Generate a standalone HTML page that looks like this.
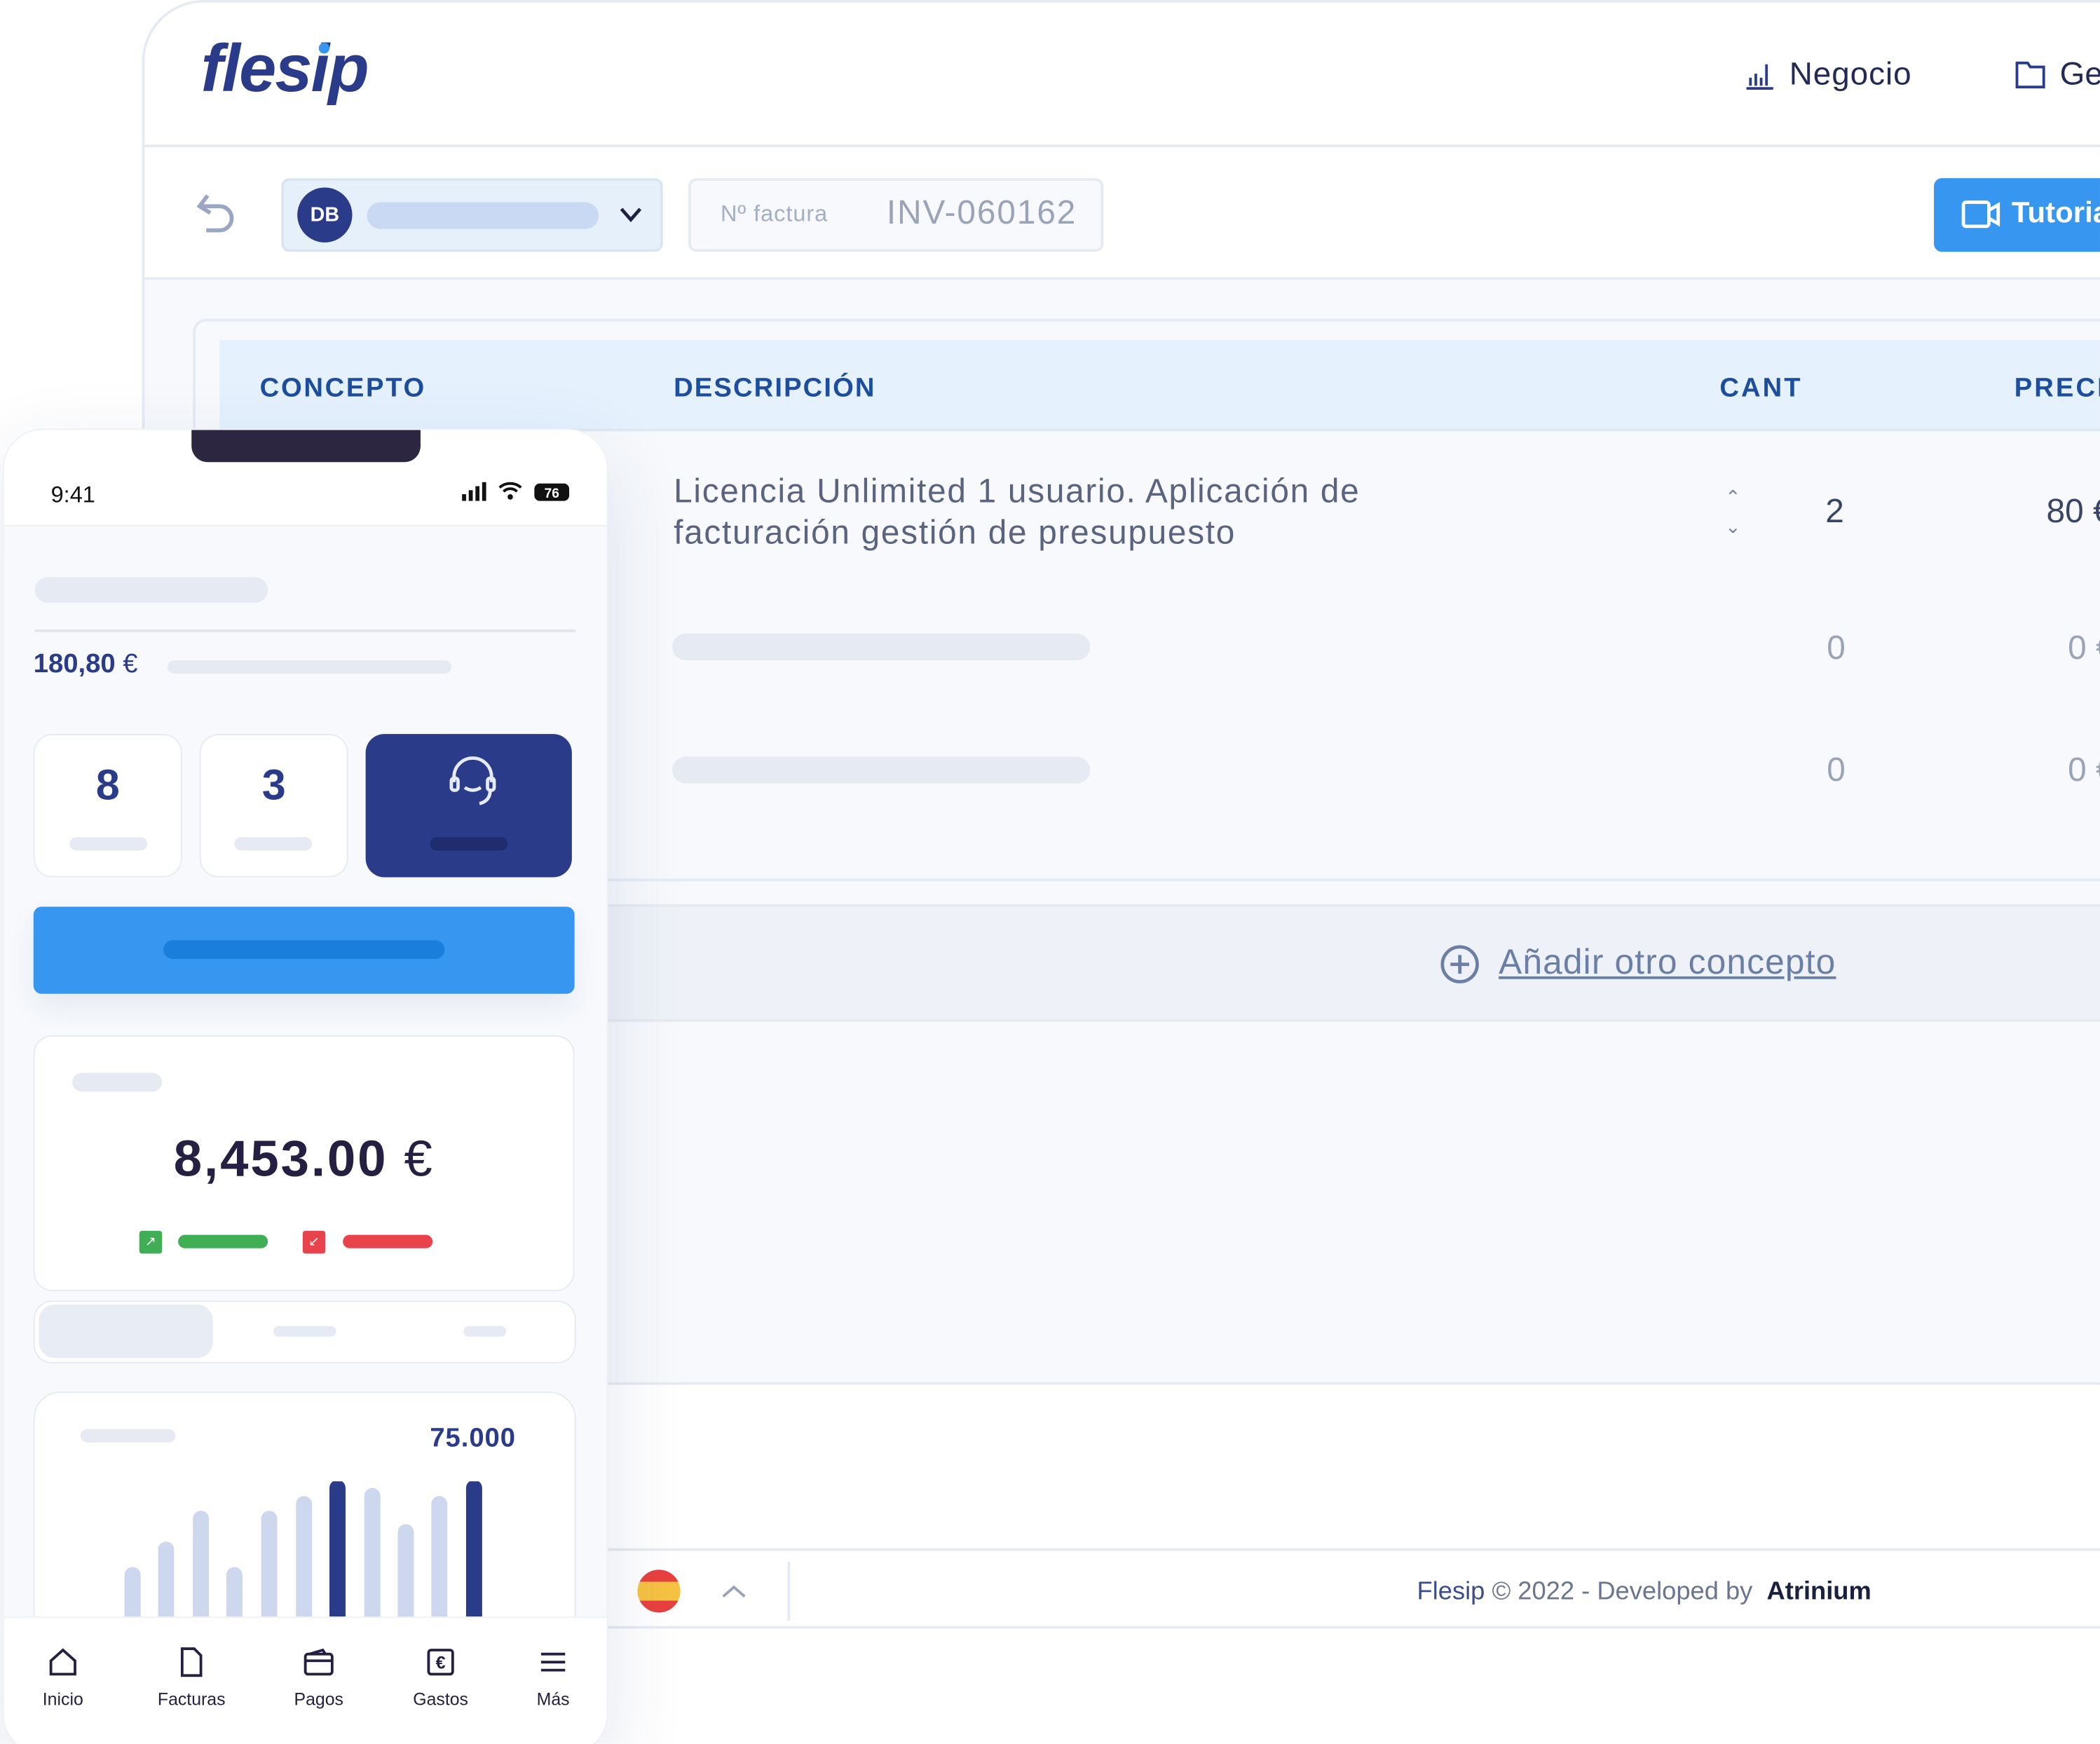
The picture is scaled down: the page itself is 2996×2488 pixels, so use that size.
<!DOCTYPE html>
<html><head><meta charset="utf-8"><style>
*{box-sizing:border-box;margin:0;padding:0}
html,body{width:2996px;height:2488px;overflow:hidden;background:#fff}
#s{position:absolute;left:0;top:0;width:1568px;height:1302px;transform:scale(1.9107);transform-origin:0 0;font-family:"Liberation Sans",sans-serif;background:#fff;overflow:hidden}
.a{position:absolute}
.bar{position:absolute;border-radius:10px}
</style></head><body><div id="s">
<div class="a" style="left:106px;top:0;width:1500px;height:1216px;border:2px solid #e6ebf3;border-radius:46px 0 0 0;background:#f7f9fc;overflow:hidden">
  <div class="a" style="left:0;top:0;width:100%;height:108px;background:#fff;border-bottom:2px solid #e6ebf3"></div>
  <div class="a" style="left:42px;top:20px;font-size:50px;font-weight:bold;font-style:italic;color:#2a3b8a;letter-spacing:-1px">flesip</div>
  <div class="a" style="left:130px;top:30px;width:8px;height:8px;border-radius:50%;background:#3797f0"></div>
  <svg class="a" style="left:1194px;top:42px" width="24" height="24" viewBox="0 0 24 24" fill="none" stroke="#2a3b8a" stroke-width="2"><path d="M2 22h20M5 20v-6M9 20v-9M13 20v-6M17 20V4"/></svg>
  <div class="a" style="left:1228px;top:40px;font-size:24px;color:#222a55;letter-spacing:0.5px">Negocio</div>
  <svg class="a" style="left:1396px;top:42px" width="26" height="24" viewBox="0 0 26 24" fill="none" stroke="#2a3b8a" stroke-width="2"><path d="M2 3h8l2 3h10v15H2z"/></svg>
  <div class="a" style="left:1430px;top:40px;font-size:24px;color:#222a55">Ge</div>
  <div class="a" style="left:0;top:108px;width:100%;height:99px;background:#fff;border-bottom:2px solid #e6ebf3"></div>
  <svg class="a" style="left:38px;top:140px" width="32" height="36" viewBox="0 0 32 36" fill="none" stroke="#9aa6c4" stroke-width="3"><path d="M9 4 3 12l8 5M4 12h14a9 9 0 0 1 0 18H8"/></svg>
  <div class="a" style="left:102px;top:131px;width:285px;height:55px;background:#e6f0fb;border:2px solid #dbe5f2;border-radius:6px"></div>
  <div class="a" style="left:114px;top:138px;width:41px;height:41px;border-radius:50%;background:#2a3b8a;color:#fff;font-size:15px;font-weight:bold;text-align:center;line-height:41px">DB</div>
  <div class="bar" style="left:166px;top:149px;width:173px;height:20px;background:#c9d9f3"></div>
  <svg class="a" style="left:354px;top:152px" width="18" height="12" viewBox="0 0 18 12" fill="none" stroke="#222040" stroke-width="2.5"><path d="M2 2l7 8 7-8"/></svg>
  <div class="a" style="left:406px;top:131px;width:310px;height:55px;background:#f7f9fc;border:2px solid #e6ebf3;border-radius:6px"></div>
  <div class="a" style="left:430px;top:148px;font-size:17px;color:#a4aec4;letter-spacing:0.5px">Nº factura</div>
  <div class="a" style="left:554px;top:143px;font-size:25px;color:#9aa4b8;letter-spacing:1px">INV-060162</div>
  <div class="a" style="left:1336px;top:131px;width:200px;height:55px;background:#3797f0;border-radius:6px"></div>
  <svg class="a" style="left:1356px;top:147px" width="30" height="22" viewBox="0 0 30 22" fill="none" stroke="#fff" stroke-width="2.5"><rect x="2" y="2" width="19" height="18" rx="2"/><path d="M21 8l7-4v14l-7-4"/></svg>
  <div class="a" style="left:1394px;top:144px;font-size:22px;font-weight:bold;color:#fff">Tutorial</div>
  <div class="a" style="left:36px;top:236px;width:1500px;height:420px;border:2px solid #e6ebf3;border-radius:10px 0 0 0;background:#f7f9fc"></div>
  <div class="a" style="left:56px;top:252px;width:1460px;height:68px;background:#e5f1fd;border-bottom:2px solid #e0e8f2"></div>
  <div class="a" style="left:86px;top:277px;font-size:20px;font-weight:bold;color:#1d4e9e;letter-spacing:1.4px">CONCEPTO</div>
  <div class="a" style="left:395px;top:277px;font-size:20px;font-weight:bold;color:#1d4e9e;letter-spacing:1.1px">DESCRIPCIÓN</div>
  <div class="a" style="left:1176px;top:277px;font-size:20px;font-weight:bold;color:#1d4e9e;letter-spacing:1.6px">CANT</div>
  <div class="a" style="left:1396px;top:277px;font-size:20px;font-weight:bold;color:#1d4e9e;letter-spacing:1.6px">PRECIO</div>
  <div class="a" style="left:395px;top:350px;font-size:25px;line-height:31px;color:#5a6480;letter-spacing:0.9px">Licencia Unlimited 1 usuario. Aplicación de<br>facturación gestión de presupuesto</div>
  <div class="a" style="left:1180px;top:358px;font-size:14px;line-height:22px;color:#7a84a0">⌃<br>⌄</div>
  <div class="a" style="left:1255px;top:366px;font-size:25px;color:#3a4466">2</div>
  <div class="a" style="left:1420px;top:366px;font-size:25px;color:#3a4466">80 €</div>
  <div class="bar" style="left:394px;top:471px;width:312px;height:20px;background:#e6ebf3"></div>
  <div class="a" style="left:1256px;top:468px;font-size:25px;color:#9aa4b8">0</div>
  <div class="a" style="left:1436px;top:468px;font-size:25px;color:#9aa4b8">0 €</div>
  <div class="bar" style="left:394px;top:563px;width:312px;height:20px;background:#e6ebf3"></div>
  <div class="a" style="left:1256px;top:559px;font-size:25px;color:#9aa4b8">0</div>
  <div class="a" style="left:1436px;top:559px;font-size:25px;color:#9aa4b8">0 €</div>
  <div class="a" style="left:0;top:673px;width:100%;height:88px;background:#eef2f8;border-top:2px solid #e6ebf3;border-bottom:2px solid #e6ebf3"></div>
  <svg class="a" style="left:966px;top:702px" width="32" height="32" viewBox="0 0 32 32" fill="none" stroke="#6b7fa6" stroke-width="2.5"><circle cx="16" cy="16" r="13"/><path d="M16 9v14M9 16h14"/></svg>
  <div class="a" style="left:1011px;top:701px;font-size:26px;color:#6b7fa6;text-decoration:underline;letter-spacing:0.6px">Añadir otro concepto</div>
  <div class="a" style="left:0;top:1030px;width:100%;height:2px;background:#e6ebf3"></div>
  <div class="a" style="left:0;top:1032px;width:100%;height:122px;background:#fff"></div>
  <div class="a" style="left:0;top:1154px;width:100%;height:62px;background:#fff;border-top:2px solid #e6ebf3"></div>
  <div class="a" style="left:368px;top:1170px;width:32px;height:32px;border-radius:50%;background:linear-gradient(#e8403f 0 28%,#f5c242 28% 72%,#e8403f 72%)"></div>
  <svg class="a" style="left:430px;top:1180px" width="20" height="12" viewBox="0 0 20 12" fill="none" stroke="#9aa4b8" stroke-width="2"><path d="M2 10l8-7 8 7"/></svg>
  <div class="a" style="left:480px;top:1164px;width:2px;height:44px;background:#e6ebf3"></div>
  <div class="a" style="left:950px;top:1176px;font-size:19px;color:#3a4f8a">Flesip <span style="color:#6b7590">© 2022 - Developed by</span> <b style="color:#1a2040">&nbsp;Atrinium</b></div>
</div>
<div class="a" style="left:2px;top:320px;width:452px;height:990px;border-radius:30px;background:#f7f9fc;box-shadow:0 20px 60px rgba(40,60,120,.12);overflow:hidden;border:1px solid #eef1f6">
  <div class="a" style="left:0;top:0;width:100%;height:72px;background:#fff;border-bottom:1px solid #eef1f6"></div>
  <div class="a" style="left:140px;top:0;width:171px;height:24px;background:#2d2640;border-radius:0 0 12px 12px"></div>
  <div class="a" style="left:35px;top:39px;font-size:17px;color:#111">9:41</div>
  <svg class="a" style="left:340px;top:38px" width="90" height="16" viewBox="0 0 90 16"><rect x="2" y="10" width="3" height="5" fill="#111"/><rect x="7" y="7" width="3" height="8" fill="#111"/><rect x="12" y="4" width="3" height="11" fill="#111"/><rect x="17" y="1" width="3" height="14" fill="#111"/><path d="M30 5a12 12 0 0 1 16 0M33 8a7 7 0 0 1 10 0" stroke="#111" stroke-width="2" fill="none"/><circle cx="38" cy="12" r="2" fill="#111"/><rect x="56" y="2" width="26" height="13" rx="4" fill="#111"/><text x="69" y="12.5" font-size="10" fill="#fff" text-anchor="middle" font-family="Liberation Sans" font-weight="bold">76</text></svg>
  <div class="bar" style="left:23px;top:110px;width:174px;height:19px;background:#e6ebf3"></div>
  <div class="a" style="left:23px;top:149px;width:404px;height:2px;background:#e0e5ee"></div>
  <div class="a" style="left:22px;top:164px;font-size:20px;font-weight:bold;color:#2a3b8a">180,80 <span style="font-weight:normal">€</span></div>
  <div class="bar" style="left:122px;top:172px;width:212px;height:10px;background:#e6ebf3"></div>
  <div class="a" style="left:22px;top:227px;width:111px;height:107px;background:#fff;border:1px solid #e6ebf3;border-radius:14px"></div>
  <div class="a" style="left:22px;top:247px;width:111px;text-align:center;font-size:32px;font-weight:bold;color:#2a3b8a">8</div>
  <div class="bar" style="left:49px;top:304px;width:58px;height:10px;background:#e6ebf3"></div>
  <div class="a" style="left:146px;top:227px;width:111px;height:107px;background:#fff;border:1px solid #e6ebf3;border-radius:14px"></div>
  <div class="a" style="left:146px;top:247px;width:111px;text-align:center;font-size:32px;font-weight:bold;color:#2a3b8a">3</div>
  <div class="bar" style="left:172px;top:304px;width:58px;height:10px;background:#e6ebf3"></div>
  <div class="a" style="left:270px;top:227px;width:154px;height:107px;background:#2a3b8a;border-radius:14px"></div>
  <svg class="a" style="left:330px;top:243px" width="40" height="40" viewBox="0 0 40 40" fill="none" stroke="#e6ebf7" stroke-width="2.5"><path d="M6 20v-4a14 14 0 0 1 28 0v4"/><rect x="4" y="17" width="5" height="9" rx="2"/><rect x="31" y="17" width="5" height="9" rx="2"/><path d="M14 24q6 4 12 0M33 26q0 8-8 10"/></svg>
  <div class="bar" style="left:318px;top:304px;width:58px;height:10px;background:#1f2d6e"></div>
  <div class="a" style="left:22px;top:356px;width:404px;height:65px;background:#3797f0;border-radius:6px;box-shadow:0 10px 20px rgba(40,60,120,.08)"></div>
  <div class="bar" style="left:119px;top:381px;width:210px;height:14px;background:#1a7edc"></div>
  <div class="a" style="left:22px;top:452px;width:404px;height:191px;background:#fff;border:1px solid #e6ebf3;border-radius:14px"></div>
  <div class="bar" style="left:51px;top:480px;width:67px;height:14px;background:#e6ebf3"></div>
  <div class="a" style="left:22px;top:524px;width:404px;text-align:center;font-size:38px;font-weight:bold;color:#252042;letter-spacing:1.5px">8,453.00 <span style="font-weight:normal">€</span></div>
  <div class="a" style="left:101px;top:598px;width:17px;height:17px;background:#3fae55;border-radius:2px;color:#fff;font-size:10px;text-align:center;line-height:17px">↗</div>
  <div class="bar" style="left:130px;top:601px;width:67px;height:10px;background:#3fae55"></div>
  <div class="a" style="left:223px;top:598px;width:17px;height:17px;background:#e8434d;border-radius:2px;color:#fff;font-size:10px;text-align:center;line-height:17px">↙</div>
  <div class="bar" style="left:253px;top:601px;width:67px;height:10px;background:#e8434d"></div>
  <div class="a" style="left:22px;top:650px;width:405px;height:47px;background:#fff;border:1px solid #e6ebf3;border-radius:14px"></div>
  <div class="a" style="left:26px;top:653px;width:130px;height:40px;background:#e8ecf4;border-radius:12px"></div>
  <div class="bar" style="left:201px;top:669px;width:47px;height:8px;background:#e6ebf3"></div>
  <div class="bar" style="left:343px;top:669px;width:32px;height:8px;background:#e6ebf3"></div>
  <div class="a" style="left:22px;top:718px;width:405px;height:220px;background:#fff;border:1px solid #e6ebf3;border-radius:20px"></div>
  <div class="bar" style="left:57px;top:746px;width:71px;height:10px;background:#e6ebf3"></div>
  <div class="a" style="left:318px;top:742px;font-size:20px;font-weight:bold;color:#2a3b8a;letter-spacing:0.5px">75.000</div>
  <svg class="a" style="left:88px;top:785px" width="275" height="105" viewBox="0 0 275 105"><g stroke-width="12" stroke-linecap="round"><path d="M8 110V70M33 110V51M59 110V28M84 110V70M110 110V28M136 110V17M187 110V11M212 110V38M237 110V17" stroke="#cdd8ee"/><path d="M161 110V5M263 110V5" stroke="#2a3b8a"/></g></svg>
  <div class="a" style="left:0;top:886px;width:100%;height:104px;background:#fff;border-top:1px solid #eef1f6"></div>
  <svg class="a" style="left:32px;top:908px" width="24" height="24" viewBox="0 0 24 24" fill="none" stroke="#252042" stroke-width="2"><path d="M3 11l9-8 9 8v10H3z"/></svg>
  <svg class="a" style="left:128px;top:908px" width="24" height="24" viewBox="0 0 24 24" fill="none" stroke="#252042" stroke-width="2"><path d="M5 2h9l5 5v15H5z"/></svg>
  <svg class="a" style="left:223px;top:908px" width="24" height="24" viewBox="0 0 24 24" fill="none" stroke="#252042" stroke-width="2"><rect x="2" y="6" width="20" height="15" rx="2"/><path d="M5 6l10-3 2 3M2 11h20"/></svg>
  <svg class="a" style="left:314px;top:908px" width="24" height="24" viewBox="0 0 24 24" fill="none" stroke="#252042" stroke-width="2"><rect x="3" y="3" width="18" height="18" rx="2"/><text x="12" y="17" font-size="13" text-anchor="middle" fill="#252042" stroke="none" font-family="Liberation Sans" font-weight="bold">€</text></svg>
  <svg class="a" style="left:398px;top:908px" width="24" height="24" viewBox="0 0 24 24" fill="none" stroke="#252042" stroke-width="2"><path d="M3 6h18M3 12h18M3 18h18"/></svg>
  <div class="a" style="left:0;top:940px;width:88px;text-align:center;font-size:13px;color:#252042">Inicio</div>
  <div class="a" style="left:96px;top:940px;width:88px;text-align:center;font-size:13px;color:#252042">Facturas</div>
  <div class="a" style="left:191px;top:940px;width:88px;text-align:center;font-size:13px;color:#252042">Pagos</div>
  <div class="a" style="left:282px;top:940px;width:88px;text-align:center;font-size:13px;color:#252042">Gastos</div>
  <div class="a" style="left:366px;top:940px;width:88px;text-align:center;font-size:13px;color:#252042">Más</div>
</div>
</div></body></html>
